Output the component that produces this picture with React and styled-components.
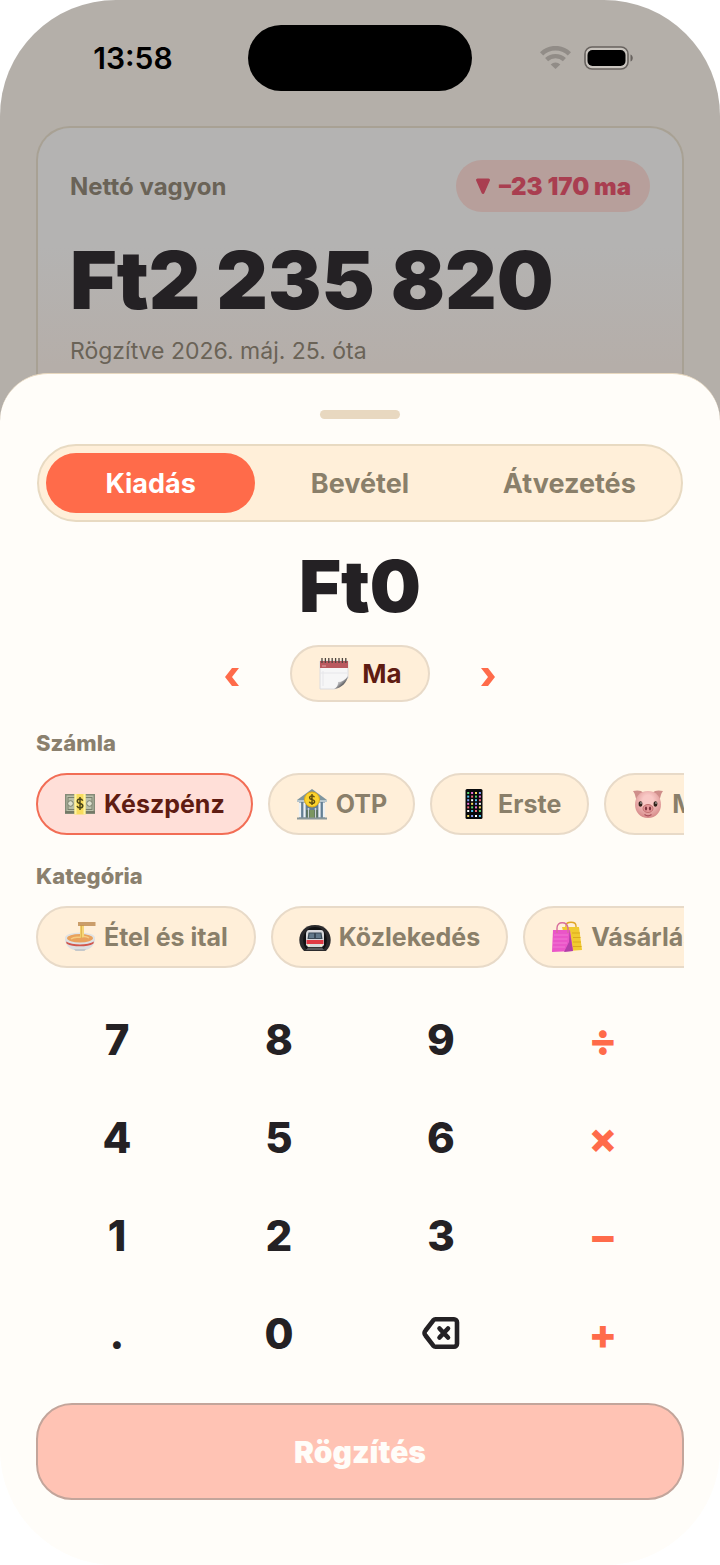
import React, { useState } from "react";
import styled, { createGlobalStyle } from "styled-components";

const accounts = [
  { id: "cash", name: "Készpénz", icon: <MoneyIcon /> },
  { id: "otp", name: "OTP", icon: <BankIcon /> },
  { id: "erste", name: "Erste", icon: <PhoneIcon /> },
  { id: "savings", name: "Megtakarítás", icon: <PigIcon /> },
];

const categories = [
  { id: "food", name: "Étel és ital", icon: <BowlIcon /> },
  { id: "transport", name: "Közlekedés", icon: <MetroIcon /> },
  { id: "shopping", name: "Vásárlás", icon: <BagsIcon /> },
];

const tabs = ["Kiadás", "Bevétel", "Átvezetés"];

const keys = [
  "7", "8", "9", "÷",
  "4", "5", "6", "×",
  "1", "2", "3", "−",
  ".", "0", "del", "+",
];

const operators = ["÷", "×", "−", "+"];

export default function App() {
  const [tab, setTab] = useState("Kiadás");
  const [account, setAccount] = useState("cash");
  const [category, setCategory] = useState(null);
  const [amount, setAmount] = useState("0");

  const handleKey = key => {
    if (key === "del") {
      setAmount(amount.length > 1 ? amount.slice(0, -1) : "0");
      return;
    }
    setAmount(amount === "0" && !operators.includes(key) ? key : amount + key);
  };

  return (
    <Screen>
      <GlobalStyle />
      <StatusBar>
        <Clock>13:58</Clock>
        <Island />
        <StatusIcons>
          <WifiIcon />
          <BatteryIcon />
        </StatusIcons>
      </StatusBar>

      <WorthCard>
        <WorthHeader>
          <WorthTitle>Nettó vagyon</WorthTitle>
          <Change>
            <DownIcon />
            –23&nbsp;170 ma
          </Change>
        </WorthHeader>
        <WorthAmount>Ft2&nbsp;235&nbsp;820</WorthAmount>
        <WorthNote>Rögzítve 2026. máj. 25. óta</WorthNote>
      </WorthCard>

      <Sheet>
        <Handle />
        <Tabs role="tablist">
          {tabs.map(name => (
            <Tab
              key={name}
              type="button"
              role="tab"
              aria-selected={tab === name}
              $active={tab === name}
              onClick={() => setTab(name)}
            >
              {name}
            </Tab>
          ))}
        </Tabs>

        <Amount>Ft{amount}</Amount>

        <DateRow>
          <DateArrow type="button" aria-label="Előző nap">
            <ChevronIcon points="15,1 8,1 1,10 8,19 15,19 8,10" />
          </DateArrow>
          <DateButton type="button">
            <CalendarIcon />
            Ma
          </DateButton>
          <DateArrow type="button" aria-label="Következő nap">
            <ChevronIcon points="1,1 8,1 15,10 8,19 1,19 8,10" />
          </DateArrow>
        </DateRow>

        <Label id="account-label">Számla</Label>
        <Chips role="group" aria-labelledby="account-label">
          {accounts.map(item => (
            <Chip
              key={item.id}
              type="button"
              $active={account === item.id}
              onClick={() => setAccount(item.id)}
            >
              {item.icon}
              {item.name}
            </Chip>
          ))}
        </Chips>

        <Label id="category-label">Kategória</Label>
        <Chips role="group" aria-labelledby="category-label">
          {categories.map(item => (
            <Chip
              key={item.id}
              type="button"
              $active={category === item.id}
              onClick={() => setCategory(item.id)}
            >
              {item.icon}
              {item.name}
            </Chip>
          ))}
        </Chips>

        <Keypad>
          {keys.map(key => (
            <Key
              key={key}
              type="button"
              aria-label={key === "del" ? "Törlés" : undefined}
              $operator={operators.includes(key)}
              onClick={() => handleKey(key)}
            >
              {key === "del" ? <DeleteIcon /> : key}
            </Key>
          ))}
        </Keypad>

        <Submit type="button" disabled={amount === "0"}>
          Rögzítés
        </Submit>
      </Sheet>
    </Screen>
  );
}

function WifiIcon() {
  return (
    <svg width="31" height="24" viewBox="0 0 31 24" fill="none" stroke="#918c87">
      <path d="M1.600 7.800a20 20 0 0 1 27.800 0" strokeWidth="4.600" />
      <path d="M6.600 13.600a13 13 0 0 1 17.800 0" strokeWidth="4.400" />
      <path d="M15.500 23l-4.800-4.600a7 7 0 0 1 9.600 0z" fill="#918c87" stroke="none" />
    </svg>
  );
}

function BatteryIcon() {
  return (
    <svg width="50" height="24" viewBox="0 0 50 24">
      <rect x="1" y="1" width="43" height="22" rx="7" fill="#c9c4be" stroke="#67625e" strokeWidth="1.600" />
      <rect x="3.500" y="4" width="38" height="16" rx="5" fill="#000" />
      <path d="M46.500 8.500c3 1 3 6 0 7z" fill="#67625e" />
    </svg>
  );
}

function DownIcon() {
  return (
    <svg width="16" height="17" viewBox="0 0 16 17">
      <path
        d="M2.500 2h11L8 14.500z"
        fill="#a93e50"
        stroke="#a93e50"
        strokeWidth="3"
        strokeLinejoin="round"
      />
    </svg>
  );
}

function ChevronIcon({ points }) {
  return (
    <svg width="16" height="20" viewBox="0 0 16 20">
      <polygon points={points} fill="#ff6b4a" />
    </svg>
  );
}

function DeleteIcon() {
  return (
    <svg
      width="40"
      height="34"
      viewBox="0 0 40 34"
      fill="none"
      stroke="#242124"
      strokeWidth="4.600"
      strokeLinecap="round"
      strokeLinejoin="round"
    >
      <path d="M14.500 3.300H33a3 3 0 0 1 3 3v21.400a3 3 0 0 1-3 3H14.500a3 3 0 0 1-2.200-1L4.500 19.500a3.600 3.600 0 0 1 0-5l7.800-10.200a3 3 0 0 1 2.200-1z" />
      <path d="M18.500 12.500l8.500 9M27 12.500l-8.500 9" />
    </svg>
  );
}

function CalendarIcon() {
  return (
    <svg width="32" height="34" viewBox="0 0 32 34">
      <defs>
        <linearGradient id="page-curl" x1="0" y1="0" x2="1" y2="1">
          <stop offset="0.200" stopColor="#f4f4f5" />
          <stop offset="0.450" stopColor="#b9b9bc" />
          <stop offset="0.700" stopColor="#48484b" />
        </linearGradient>
      </defs>
      <path d="M2 4h28v17L17 32H2z" fill="#f6f6f7" stroke="#dcdcdf" />
      <path d="M2 4h28v7H2z" fill="#b9585e" />
      <path d="M4 9h4" stroke="#e3a4a6" />
      <path d="M5 14v15M2 16h27" stroke="#e6e6ea" />
      <path d="M30 19c-1 6-6 12-14 13 4-2 4-5 4-7 4 0 7-2 10-6z" fill="url(#page-curl)" />
      <path
        d="M4 1v5M7.400 1v5M10.800 1v5M14.200 1v5M17.600 1v5M21 1v5M24.400 1v5M27.800 1v5"
        stroke="#4c4641"
        strokeWidth="1.300"
      />
    </svg>
  );
}

function MoneyIcon() {
  return (
    <svg width="32" height="32" viewBox="0 0 32 32">
      <rect x="1" y="6" width="30" height="20" fill="#858b78" />
      <rect x="2.500" y="7.500" width="27" height="15.500" fill="#b9bfa9" />
      <rect x="4" y="9.500" width="24" height="12" fill="none" stroke="#7a806d" />
      <path d="M1 24h30" stroke="#646956" />
      <circle cx="6.500" cy="15.500" r="2.800" fill="#dbdecd" stroke="#7a806d" />
      <circle cx="25.500" cy="15.500" r="2.800" fill="#dbdecd" stroke="#7a806d" />
      <rect x="10.500" y="6" width="11" height="20.500" fill="#f8dc5e" />
      <path d="M10.500 6h2v20.500h-2zM19.500 6h2v20.500h-2z" fill="#fdf3a3" />
      <path
        d="M18.700 12.700c-.5-1.300-1.500-1.700-2.700-1.700-1.600 0-2.700.8-2.700 2.200 0 3.200 5.500 1.500 5.500 4.500 0 1.500-1.300 2.200-2.900 2.200-1.400 0-2.500-.6-2.900-2M16 9v13"
        fill="none"
        stroke="#4b4619"
        strokeWidth="1.500"
      />
    </svg>
  );
}

function BankIcon() {
  return (
    <svg width="32" height="32" viewBox="0 0 32 32">
      <path d="M1 12L16 1l15 11v2H1z" fill="#7e959f" />
      <path d="M3 14h26v16H3z" fill="#647f94" />
      <path d="M10.500 22h11v8h-11z" fill="#46603c" />
      <path d="M14 22h4v8h-4z" fill="#7b9660" />
      <path
        d="M4 14.500v15M8.500 14.500v15M23.500 14.500v15M28 14.500v15"
        stroke="#edf1f3"
        strokeWidth="2.200"
      />
      <path d="M12.500 20v10M19.500 20v10" stroke="#c9d2d6" strokeWidth="1.500" />
      <path d="M1 13h30" stroke="#b9c7cd" strokeWidth="2" />
      <path d="M1 30.500h30" stroke="#8a9799" strokeWidth="2" />
      <circle cx="16" cy="11.500" r="7.500" fill="#fbd32d" stroke="#e0aa15" />
      <path
        d="M18.500 9.200c-.5-1-1.400-1.300-2.500-1.300-1.400 0-2.400.6-2.400 1.800 0 2.700 5 1.300 5 3.800 0 1.200-1.100 1.900-2.600 1.900-1.300 0-2.300-.5-2.700-1.600M16 6v11"
        fill="none"
        stroke="#5b4a0f"
        strokeWidth="1.400"
      />
    </svg>
  );
}

function PhoneIcon() {
  const colors = ["#5ad46a", "#fff", "#e86fd0", "#54c6f0", "#f7dc5b", "#f0667a", "#7f9cf5"];
  const apps = [];
  for (let row = 0; row < 7; row++) {
    for (let col = 0; col < 4; col++) {
      apps.push(
        <rect
          key={`${row}-${col}`}
          x={9.2 + col * 3.9}
          y={row === 6 ? 27 : 4 + row * 3.6}
          width="2"
          height="2"
          fill={colors[(row * 3 + col * 2) % 7]}
        />
      );
    }
  }
  return (
    <svg width="32" height="32" viewBox="0 0 32 32">
      <rect x="7.500" y="1" width="17" height="30" rx="1.500" fill="#08090b" />
      {apps}
    </svg>
  );
}

function PigIcon() {
  return (
    <svg width="32" height="32" viewBox="0 0 32 32">
      <defs>
        <radialGradient id="pig-face" cx="0.5" cy="0.35" r="0.65">
          <stop offset="0.300" stopColor="#f9c9c6" />
          <stop offset="1" stopColor="#d68a89" />
        </radialGradient>
      </defs>
      <path d="M1 3c4-1 8-1 11 2L5 12C3 10 4 7 1 3z" fill="#cf8e8a" />
      <path d="M31 3c-4-1-8-1-11 2l7 7c2-2 1-5 4-9z" fill="#cf8e8a" />
      <path d="M16 3c8 0 13 6 13 13.500S24 30 16 30 3 24 3 16.500 8 3 16 3z" fill="url(#pig-face)" />
      <ellipse cx="8.500" cy="16" rx="1.900" ry="2.800" fill="#30221a" />
      <ellipse cx="23.500" cy="16" rx="1.900" ry="2.800" fill="#30221a" />
      <circle cx="9" cy="15" r="0.700" fill="#fff" />
      <circle cx="24" cy="15" r="0.700" fill="#fff" />
      <ellipse cx="16" cy="20.500" rx="5" ry="4" fill="#e5989a" stroke="#c2716f" />
      <ellipse cx="14" cy="20.500" rx="1.100" ry="1.900" fill="#7d333c" />
      <ellipse cx="18" cy="20.500" rx="1.100" ry="1.900" fill="#7d333c" />
      <path d="M12.500 26.500c2 1.500 5 1.500 7 0" fill="none" stroke="#a9505a" strokeWidth="1.200" />
    </svg>
  );
}

function BowlIcon() {
  return (
    <svg width="32" height="32" viewBox="0 0 32 32">
      <path d="M1 18h30c0 6-5 10-9 11H10C6 28 1 24 1 18z" fill="#dddfe1" />
      <path d="M2 20.500c6 4 22 4 28 0l-.700 2.200c-6 3.500-20.600 3.500-26.600 0z" fill="#d2564c" />
      <path d="M10 28h12l-1.500 2h-9z" fill="#c5c8cb" />
      <ellipse cx="16" cy="17" rx="15" ry="5.500" fill="#dfe2e4" />
      <ellipse cx="16" cy="17.200" rx="13" ry="4.200" fill="#e9a15c" />
      <path d="M7 18c4-3 7-1 10-2s5-1 8 1" fill="none" stroke="#f6cb80" strokeWidth="1.500" />
      <path d="M16 4h4v12h-4z" fill="#f6d676" />
      <path d="M17.300 5v12" stroke="#dcae49" />
      <path d="M14 2h17.500M14 4h17.500" stroke="#b98345" strokeWidth="1.400" />
    </svg>
  );
}

function MetroIcon() {
  return (
    <svg width="32" height="32" viewBox="0 0 32 32">
      <path d="M5 30C-4 22 0 4 16 4s20 18 11 26z" fill="#2b2a2c" />
      <path d="M7 28C1 20 5 6 16 6s15 14 9 22z" fill="#111113" />
      <path d="M10 9h12c2 0 3 2 3 4v11l-2 2H9l-2-2V13c0-2 1-4 3-4z" fill="#d7d9dc" />
      <path d="M9.500 11.500h13l1 6.500h-15z" fill="#394956" />
      <path d="M10.500 12.500h4.500V17h-5zM17 12.500h4.500l.5 4.500h-5z" fill="#62798a" />
      <path d="M7.500 19h17v4h-17z" fill="#df3945" />
      <circle cx="10" cy="24.300" r="1" fill="#fff3bf" />
      <circle cx="22" cy="24.300" r="1" fill="#fff3bf" />
      <path d="M9 26.500h14l2 2.500H7z" fill="#57585c" />
    </svg>
  );
}

function BagsIcon() {
  return (
    <svg width="32" height="32" viewBox="0 0 32 32">
      <path d="M15 8V5c0-5 10-5 10 0v5" fill="none" stroke="#e0a526" strokeWidth="1.400" />
      <path d="M11 6h17l3 23-14 1z" fill="#f1ca30" />
      <path d="M21 12h8M22 16.500h7.500M22 21h8M22 25.500h8.500" stroke="#dca91c" strokeWidth="1.200" />
      <path d="M2 9h17l3 21-21 1z" fill="#ea55c8" />
      <path d="M18.500 9L22 30l-9 1 5-10z" fill="#b13fa8" />
      <path d="M6 12V7c0-7 10-7 11 0v5" fill="none" stroke="#d86c9b" strokeWidth="1.400" />
      <path d="M3 14h14M2.500 18h14M2 22h14M2 26h12" stroke="#f178d3" />
    </svg>
  );
}

const GlobalStyle = createGlobalStyle`
  * {
    box-sizing: border-box;
  }
  body {
    margin: 0;
    background-color: #fff;
    font-family: Inter, "Liberation Sans", sans-serif;
  }
  button {
    font-family: inherit;
    cursor: pointer;
  }
  svg {
    flex-shrink: 0;
  }
`;

const Screen = styled.main`
  display: flex;
  flex-direction: column;
  min-height: 100vh;
  overflow: hidden;
  border-radius: 116px;
  background: linear-gradient(#b4afa9 480px, #fffdf9 480px);
`;

const StatusBar = styled.header`
  display: grid;
  grid-template-columns: 1fr auto 1fr;
  align-items: center;
  padding: 25px 0 0 20px;
`;

const Clock = styled.time`
  justify-self: center;
  padding-right: 2px;
  font-size: 30px;
  font-weight: 600;
  color: #000;
`;

const Island = styled.div`
  width: 224px;
  height: 66px;
  margin-right: 20px;
  border-radius: 33px;
  background-color: #000;
`;

const StatusIcons = styled.div`
  display: flex;
  align-items: center;
  gap: 13px;
  padding-left: 48px;
`;

const WorthCard = styled.section`
  margin: 35px 36px 0;
  padding: 32px 32px 60px;
  border: 2px solid #a8a194;
  border-bottom: 0;
  border-radius: 34px 34px 0 0;
  background: linear-gradient(#b4b3b2 40%, #b5aea9 80%);
`;

const WorthHeader = styled.div`
  display: flex;
  align-items: center;
  justify-content: space-between;
`;

const WorthTitle = styled.h2`
  margin: 0;
  font-size: 24px;
  font-weight: 700;
  color: #6a6357;
`;

const Change = styled.span`
  display: flex;
  align-items: center;
  gap: 8px;
  height: 52px;
  padding: 0 19px;
  border-radius: 26px;
  background-color: #b79f9b;
  font-size: 24px;
  font-weight: 900;
  color: #a93e50;
`;

const WorthAmount = styled.p`
  margin: 20px 0 0;
  font-size: 80px;
  font-weight: 900;
  line-height: 96px;
  white-space: nowrap;
  color: #242124;
`;

const WorthNote = styled.p`
  margin: 9px 0 0;
  font-size: 23px;
  line-height: 28px;
  color: #6a6357;
`;

const Sheet = styled.section`
  position: relative;
  display: flex;
  flex: 1;
  flex-direction: column;
  margin-top: -52px;
  padding: 36px 36px 64px;
  border-top: 1px solid #e8d8bf;
  border-radius: 48px 48px 0 0;
  background-color: #fffdf9;
`;

const Handle = styled.div`
  align-self: center;
  width: 80px;
  height: 9px;
  border-radius: 5px;
  background-color: #e8d8c0;
`;

const Tabs = styled.div`
  display: grid;
  grid-template-columns: repeat(3, 1fr);
  margin: 25px 1px 0;
  padding: 7px;
  border: 2px solid #e8dac2;
  border-radius: 39px;
  background-color: #ffefd9;
`;

const Tab = styled.button`
  height: 60px;
  padding: 0;
  border: 0;
  border-radius: 30px;
  background-color: ${({ $active }) => ($active ? "#ff6b4a" : "transparent")};
  font-size: 27px;
  font-weight: 700;
  color: ${({ $active }) => ($active ? "#fff" : "#8a7f6a")};
`;

const Amount = styled.output`
  margin: 20px 0 15px;
  font-size: 72px;
  font-weight: 900;
  line-height: 88px;
  text-align: center;
  color: #242124;
`;

const DateRow = styled.div`
  display: flex;
  align-items: center;
  justify-content: center;
  gap: 28px;
`;

const DateArrow = styled.button`
  display: grid;
  place-items: center;
  width: 60px;
  height: 57px;
  padding: 7px 0 0;
  border: 0;
  background: none;
`;

const DateButton = styled.button`
  display: flex;
  align-items: center;
  gap: 12px;
  height: 57px;
  padding: 0 26px;
  border: 2px solid #e8dac8;
  border-radius: 29px;
  background-color: #ffefd9;
  font-size: 26px;
  font-weight: 700;
  color: #5f1c12;
`;

const Label = styled.h3`
  margin: 27px 0 16px;
  font-size: 22px;
  font-weight: 800;
  line-height: 28px;
  color: #8a806e;
`;

const Chips = styled.div`
  display: flex;
  gap: 15px;
  overflow: hidden;
`;

const Chip = styled.button`
  display: flex;
  flex-shrink: 0;
  align-items: center;
  gap: 8px;
  height: 62px;
  padding: 0 26px;
  border: 2px solid ${({ $active }) => ($active ? "#f26d55" : "#e8dac8")};
  border-radius: 31px;
  background-color: ${({ $active }) => ($active ? "#ffdfd8" : "#ffefd9")};
  font-size: 25px;
  font-weight: 700;
  color: ${({ $active }) => ($active ? "#5f1c12" : "#8a7f6a")};
`;

const Keypad = styled.div`
  display: grid;
  grid-template-columns: repeat(4, 1fr);
  margin: 22px 0 21px;
`;

const Key = styled.button`
  display: grid;
  place-items: center;
  height: 98px;
  padding: 0;
  border: 0;
  background: none;
  font-size: 42px;
  font-weight: 800;
  color: ${({ $operator }) => ($operator ? "#ff6b4a" : "#242124")};
`;

const Submit = styled.button`
  height: 97px;
  border: 2px solid #c3a59b;
  border-radius: 36px;
  background-color: #ffc3b4;
  font-size: 30px;
  font-weight: 900;
  color: #fffdf9;
`;
